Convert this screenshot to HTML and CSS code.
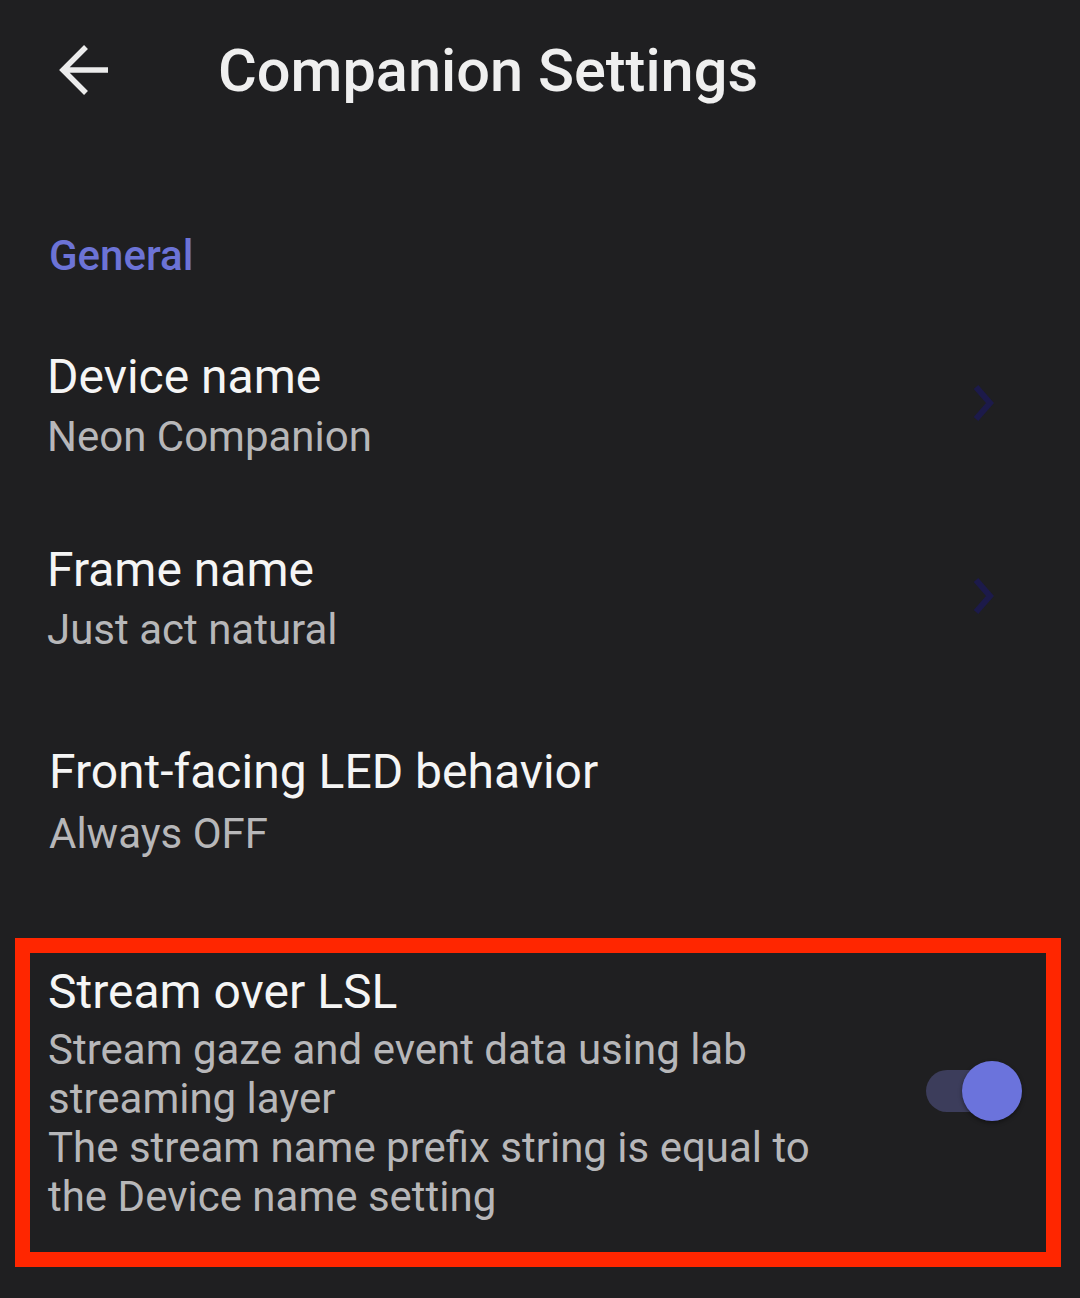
FILE: index.html
```html
<!DOCTYPE html>
<html>
<head>
<meta charset="utf-8">
<link rel="stylesheet" href="styles.css">
</head>
<body>
<div class="app">
  <header class="topbar">
    <svg class="back" width="52" height="52" viewBox="0 0 52 52">
      <path d="M50 26 H6 M28 3 L5 26 L28 49" fill="none" stroke="#ececec" stroke-width="5.5" stroke-linecap="butt" stroke-linejoin="miter"/>
    </svg>
    <h1 class="title">Companion Settings</h1>
  </header>

  <div class="section-label">General</div>

  <div class="row row-device">
    <div class="texts">
      <div class="row-title">Device name</div>
      <div class="row-sub">Neon Companion</div>
    </div>
    <svg class="chev" width="24" height="40" viewBox="0 0 24 40"><path d="M4 3 L18 19 L4 35" fill="none" stroke="#1c1a4a" stroke-width="6"/></svg>
  </div>

  <div class="row row-frame">
    <div class="texts">
      <div class="row-title">Frame name</div>
      <div class="row-sub">Just act natural</div>
    </div>
    <svg class="chev" width="24" height="40" viewBox="0 0 24 40"><path d="M4 3 L18 19 L4 35" fill="none" stroke="#1c1a4a" stroke-width="6"/></svg>
  </div>

  <div class="row row-led">
    <div class="texts">
      <div class="row-title">Front-facing LED behavior</div>
      <div class="row-sub">Always OFF</div>
    </div>
  </div>

  <div class="highlight">
    <div class="row row-lsl">
      <div class="texts">
        <div class="row-title">Stream over LSL</div>
        <div class="row-sub multi">Stream gaze and event data using lab streaming layer<br>The stream name prefix string is equal to the Device name setting</div>
      </div>
      <div class="switch"><div class="track"></div><div class="knob"></div></div>
    </div>
  </div>
</div>
</body>
</html>
```

FILE: styles.css
```css
html, body {
  margin: 0;
  padding: 0;
  background: #1f1f21;
}
.app {
  width: 1080px;
  height: 1298px;
  background: #1f1f21;
  font-family: Roboto, "Noto Sans", sans-serif;
  color: #f4f4f4;
  overflow: hidden;
}
.topbar {
  display: flex;
  align-items: center;
  height: 142px;
  padding-left: 58px;
  box-sizing: border-box;
}
.back {
  display: block;
  margin-top: -2px;
}
.title {
  margin: 0 0 0 108px;
  font-size: 59.5px;
  line-height: 70px;
  font-weight: 500;
  color: #efefef;
}
.section-label {
  margin-top: 89px;
  padding-left: 49px;
  font-size: 42px;
  font-weight: 500;
  color: #6c73d6;
  line-height: 50px;
}
.row {
  display: flex;
  align-items: center;
  justify-content: space-between;
  padding-left: 47px;
  padding-right: 84px;
}
.row-device { margin-top: 66px; }
.row-frame { margin-top: 73px; }
.row-led { margin-top: 82px; padding-left: 49px; }
.row-title {
  font-size: 48px;
  line-height: 60px;
  color: #f5f5f5;
}
.row-sub {
  font-size: 42px;
  line-height: 60px;
  color: #b7b7b9;
}
.row-led .row-sub { margin-top: 2px; }
.chev { display: block; margin-top: -6px; }
.highlight {
  margin: 74px 0 0 15px;
  width: 1046px;
  height: 329px;
  box-sizing: border-box;
  border: 15px solid #ff2600;
}
.row-lsl {
  padding: 9px 0 0 18px;
  height: 100%;
  box-sizing: border-box;
  align-items: flex-start;
}
.row-lsl .texts { width: 800px; }
.row-lsl .row-sub.multi {
  line-height: 49px;
  margin-top: 3px;
}
.switch {
  position: relative;
  width: 96px;
  height: 60px;
  margin: 99px 24px 0 0;
}
.track {
  position: absolute;
  left: 0;
  top: 9px;
  width: 76px;
  height: 42px;
  border-radius: 21px;
  background: #3c3d5b;
}
.knob {
  position: absolute;
  left: 36px;
  top: 0;
  width: 60px;
  height: 60px;
  border-radius: 50%;
  background: #6b73dc;
  box-shadow: 0 2px 4px rgba(0,0,0,0.4);
}
```
